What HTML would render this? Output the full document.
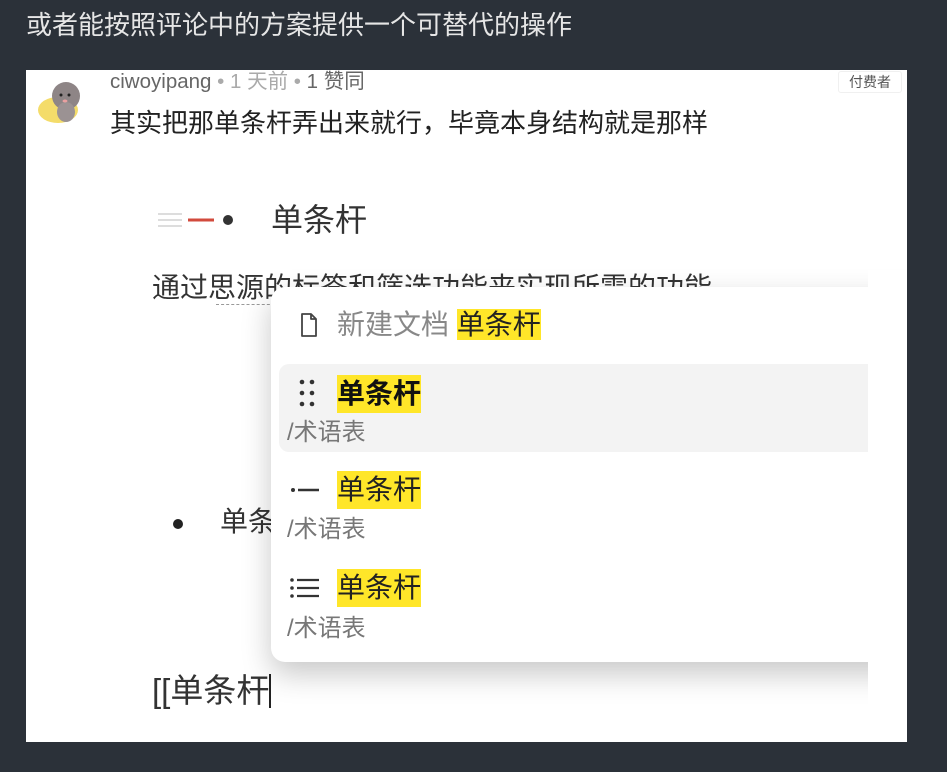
<!DOCTYPE html>
<html><head><meta charset="utf-8"><style>
*{margin:0;padding:0;box-sizing:border-box}
body{width:947px;height:772px;background:#2b3139;position:relative;overflow:hidden;font-family:"Liberation Sans","Noto Sans CJK SC",sans-serif}
.a{position:absolute;white-space:nowrap}
.hl{background:#ffe629}
</style></head><body>
<div class="a" style="left:26px;top:8px;font-size:26px;line-height:34px;color:#e6e6e6">或者能按照评论中的方案提供一个可替代的操作</div>
<div class="a" style="left:26px;top:70px;width:881px;height:672px;background:#fff;overflow:hidden">
  <svg class="a" style="left:10px;top:4px" width="56" height="56" viewBox="0 0 56 56">
    <ellipse cx="22" cy="36" rx="20" ry="13" fill="#f4dc6a"/>
    <ellipse cx="30" cy="22" rx="14" ry="14" fill="#8e8586"/>
    <ellipse cx="30" cy="38" rx="9" ry="10" fill="#9b9293"/>
    <circle cx="25" cy="21" r="1.5" fill="#222"/><circle cx="33" cy="21" r="1.5" fill="#222"/>
    <ellipse cx="29" cy="27" rx="2.5" ry="1.5" fill="#e9a0a0"/>
  </svg>
  <div class="a" style="left:84px;top:0px;font-size:20.5px;line-height:24px;color:#666">ciwoyipang <span style="color:#aaa">• 1 天前 •</span> 1 赞同</div>
  <div class="a" style="left:812px;top:1px;font-size:14px;line-height:20px;color:#555;border:1px solid #f0f0f0;border-radius:3px;padding:0 10px;background:#fff">付费者</div>
  <div class="a" style="left:84px;top:36px;font-size:26px;line-height:34px;color:#222">其实把那单条杆弄出来就行，毕竟本身结构就是那样</div>
  <svg class="a" style="left:128px;top:140px" width="82" height="20" viewBox="0 0 82 20">
    <g stroke="#ddd" stroke-width="2"><line x1="4" y1="4" x2="28" y2="4"/><line x1="4" y1="10" x2="28" y2="10"/><line x1="4" y1="16" x2="28" y2="16"/></g>
    <line x1="34" y1="10" x2="60" y2="10" stroke="#d24a3c" stroke-width="3"/>
    <circle cx="74" cy="10" r="5" fill="#333"/>
  </svg>
  <div class="a" style="left:245px;top:130px;font-size:32px;line-height:40px;color:#333">单条杆</div>
  <div class="a" style="left:126px;top:200px;font-size:28px;line-height:36px;color:#333">通过思源的标签和筛选功能来实现所需的功能</div>
  <div class="a" style="left:190px;top:234px;width:64px;border-top:1px dashed #999"></div>
  <div class="a" style="left:147px;top:449px;width:10px;height:10px;border-radius:50%;background:#222"></div>
  <div class="a" style="left:194px;top:434px;font-size:28px;line-height:36px;color:#333">单条杆</div>
  <div class="a" style="left:126px;top:601px;font-size:33px;line-height:40px;color:#333">[[单条杆<span style="display:inline-block;width:2px;height:34px;background:#222;vertical-align:-6px"></span></div>
  <div class="a" style="left:245px;top:217px;width:700px;height:375px;background:#fff;border-radius:14px;box-shadow:0 12px 30px rgba(0,0,0,.22)">
    <svg class="a" style="left:28px;top:25px" width="20" height="26" viewBox="0 0 20 26"><path d="M3 2h9l5 5v17H3z M12 2v5h5" fill="none" stroke="#444" stroke-width="1.8" stroke-linejoin="round"/></svg>
    <div class="a" style="left:66px;top:19px;font-size:28px;line-height:38px;color:#888">新建文档 <span class="hl" style="color:#222">单条杆</span></div>
    <div class="a" style="left:8px;top:77px;width:700px;height:88px;background:#f3f3f3;border-radius:10px"></div>
    <svg class="a" style="left:27px;top:91px" width="20" height="30" viewBox="0 0 20 30"><g fill="#333"><circle cx="4" cy="4" r="2.3"/><circle cx="14" cy="4" r="2.3"/><circle cx="4" cy="15" r="2.3"/><circle cx="14" cy="15" r="2.3"/><circle cx="4" cy="26" r="2.3"/><circle cx="14" cy="26" r="2.3"/></g></svg>
    <div class="a hl" style="left:66px;top:88px;font-size:28px;line-height:38px;color:#111;font-weight:bold">单条杆</div>
    <div class="a" style="left:16px;top:131px;font-size:24px;line-height:30px;color:#777">/术语表</div>
    <svg class="a" style="left:18px;top:198px" width="34" height="10" viewBox="0 0 34 10"><circle cx="4" cy="5" r="2" fill="#333"/><line x1="9" y1="5" x2="30" y2="5" stroke="#333" stroke-width="2.6"/></svg>
    <div class="a hl" style="left:66px;top:184px;font-size:28px;line-height:38px;color:#222">单条杆</div>
    <div class="a" style="left:16px;top:228px;font-size:24px;line-height:30px;color:#777">/术语表</div>
    <svg class="a" style="left:18px;top:289px" width="34" height="24" viewBox="0 0 34 24"><g fill="#333"><circle cx="3" cy="4" r="1.8"/><circle cx="3" cy="12" r="1.8"/><circle cx="3" cy="20" r="1.8"/></g><g stroke="#333" stroke-width="2.2"><line x1="8" y1="4" x2="30" y2="4"/><line x1="8" y1="12" x2="30" y2="12"/><line x1="8" y1="20" x2="30" y2="20"/></g></svg>
    <div class="a hl" style="left:66px;top:282px;font-size:28px;line-height:38px;color:#222">单条杆</div>
    <div class="a" style="left:16px;top:327px;font-size:24px;line-height:30px;color:#777">/术语表</div>
  </div>
  <div class="a" style="left:842px;top:200px;width:39px;height:472px;background:#fff"></div>
</div>
</body></html>
